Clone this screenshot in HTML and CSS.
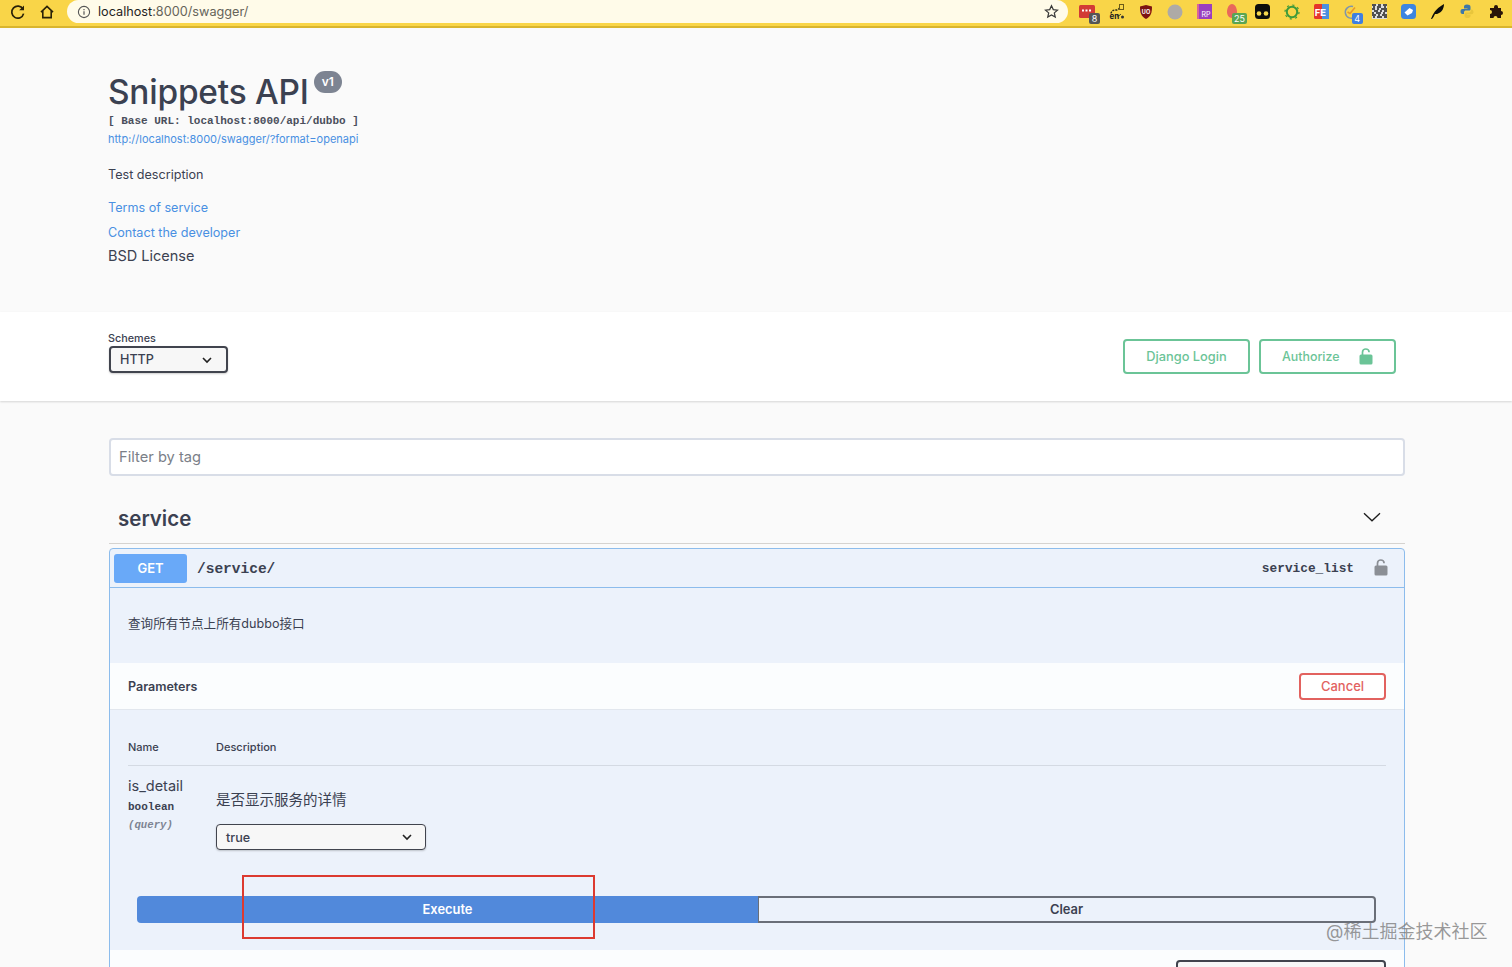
FILE: index.html
```html
<!DOCTYPE html>
<html lang="en">
<head>
<meta charset="utf-8">
<title>Snippets API</title>
<link rel="stylesheet" href="styles.css">
</head>
<body>
<header class="toolbar">
  <button class="nav-btn" aria-label="Reload"><svg width="16" height="16" viewBox="0 0 16 16"><path d="M13 5.2A6 6 0 1 0 13.6 9.6" fill="none" stroke="#2a2208" stroke-width="1.7"/><path d="M14 1.4V6.2H9.2Z" fill="#2a2208"/></svg></button>
  <button class="nav-btn" aria-label="Home"><svg width="16" height="16" viewBox="0 0 16 16"><path d="M2 8.2 8 2.4l6 5.8M3.8 7v6.6h8.4V7" fill="none" stroke="#2a2208" stroke-width="1.6"/></svg></button>
  <div class="omnibox">
    <svg class="info-icon" width="14" height="14" viewBox="0 0 14 14"><circle cx="7" cy="7" r="5.6" fill="none" stroke="#555" stroke-width="1.1"/><path d="M7 6.2v3.6M7 4.1v1.1" stroke="#555" stroke-width="1.2"/></svg>
    <span class="url"><span class="url-host">localhost</span>:8000/swagger/</span>
    <svg class="star" width="15" height="15" viewBox="0 0 16 16"><path d="M8 1.8l1.9 4.2 4.5.5-3.4 3 1 4.5L8 11.7 4 14l1-4.5-3.4-3 4.5-.5z" fill="none" stroke="#3a3a3a" stroke-width="1.3"/></svg>
  </div>
  <div class="extensions">
    <span class="ext"><svg width="17" height="16" viewBox="0 0 17 16"><rect y="1" width="16" height="13" rx="1.5" fill="#d23b35"/><path d="M3 6.500h2M6.500 6.500h2M10 6.500h2" stroke="#fff" stroke-width="2"/></svg><span class="badge badge-dark">8</span></span>
    <span class="ext"><svg width="16" height="16" viewBox="0 0 16 16"><path d="M2 9.500c.5-3 3-3.500 5-3.500s3-1 4-2.500" fill="none" stroke="#2a2a18" stroke-width="1.400" stroke-dasharray="2 1"/><rect x="10.500" y="0.500" width="4" height="5" fill="none" stroke="#6b5a18"/><text x="0.500" y="15" class="ext-en">en</text><circle cx="13.500" cy="13" r="1.500" fill="#333"/><path d="M8 12c2 0 3-1 4-2" fill="none" stroke="#2a2a18"/></svg></span>
    <span class="ext"><svg width="14" height="16" viewBox="0 0 14 16"><path d="M1 2.500 7 1l6 1.500c0 6-1 10-6 12.500C2 12.500 1 8.500 1 2.500z" fill="#7c1313"/><text x="7" y="9.500" class="ext-ub">UO</text></svg></span>
    <span class="ext"><svg width="16" height="16" viewBox="0 0 16 16"><circle cx="8" cy="8" r="7.500" fill="#aeaaa6"/></svg></span>
    <span class="ext"><svg width="15" height="15" viewBox="0 0 15 15"><rect width="15" height="15" fill="#9a3fc0"/><rect width="2" height="15" fill="#d9649a"/><text x="4.500" y="13" class="ext-rp">RP</text></svg></span>
    <span class="ext"><svg width="16" height="16" viewBox="0 0 16 16"><path d="M6 0c3 0 5 4 5 8 0 3-2 6-5 6S1 11 1 8c0-4 2-8 5-8z" fill="#e9685b"/></svg><span class="badge badge-green">25</span></span>
    <span class="ext"><svg width="15" height="15" viewBox="0 0 15 15"><rect width="15" height="15" rx="3.500" fill="#0c0c0c"/><circle cx="4" cy="9.500" r="2.300" fill="#f4d64e"/><circle cx="11" cy="9.500" r="2.300" fill="#f4d64e"/></svg></span>
    <span class="ext"><svg width="16" height="16" viewBox="0 0 16 16"><circle cx="8" cy="8" r="5.200" fill="none" stroke="#3f9a3a" stroke-width="2"/><circle cx="8" cy="8" r="7" fill="none" stroke="#3f9a3a" stroke-width="1.200" stroke-dasharray="2.200 3.300"/></svg></span>
    <span class="ext"><svg width="15" height="15" viewBox="0 0 15 15"><rect width="15" height="15" rx="1.500" fill="#e5352b"/><rect x="8" width="7" height="15" fill="#4a8fe0"/><text x="0.800" y="11.500" class="ext-fe">FE</text></svg></span>
    <span class="ext"><svg width="16" height="16" viewBox="0 0 16 16"><path d="M11 2.500A6 6 0 1 0 13 13" fill="none" stroke="#7f95ac" stroke-width="1.500"/><path d="M5.500 8l2.500 1.500 5-6" fill="none" stroke="#ea9a28" stroke-width="1.600"/></svg><span class="badge badge-blue">4</span></span>
    <span class="ext"><svg width="15" height="15" viewBox="0 0 15 15"><rect width="15" height="15" fill="#ddd"/><path d="M0 1h4M6 1h3M11 1h4M1 3h2M5 3h4M12 3h2M0 5h3M5 5h2M9 5h6M2 7h4M8 7h2M12 7h3M0 9h2M4 9h5M11 9h2M0 11h4M6 11h2M10 11h5M1 13h2M5 13h5M12 13h3" stroke="#222" stroke-width="1.500"/></svg></span>
    <span class="ext"><svg width="15" height="15" viewBox="0 0 15 15"><rect width="15" height="15" rx="3.500" fill="#3d85e0"/><path d="M3.500 8.500 8.500 4l3.500 2-1 3-4.500 2.500z" fill="#fff"/></svg></span>
    <span class="ext"><svg width="15" height="17" viewBox="0 0 15 17"><path d="M1 16C3 11 5 6 14 1c0 4-2 8-5 9-1 1-3 1-4 1-1 2-2 4-3 5z" fill="#0d0d0a"/></svg></span>
    <span class="ext"><svg width="14" height="15" viewBox="0 0 14 15"><path d="M7 .5C4.500.5 4 1.500 4 3v1.500h3.500V5H2.500C1 5 .5 6.200.5 7.500S1 10 2.500 10H4V8.500C4 7 5 6.500 6 6.500h3C10 6.500 10.500 6 10.500 5V3C10.500 1.200 9 .5 7 .5z" fill="#3f78a8"/><path d="M10.800 5.500V6.800C10.800 8 10 8.500 9 8.500H6C5 8.500 4.500 9 4.500 10v2C4.500 13.500 6 14 7.500 14s3-.5 3-2v-1.200H7v-.5h4.500C13 10.300 13.500 9 13.500 8s-.5-2.500-2-2.500z" fill="#e8c63c"/></svg></span>
    <span class="ext"><svg width="15" height="15" viewBox="0 0 15 15"><path d="M5 3a2 2 0 1 1 4 0v1h3v3a2 2 0 1 1 0 4v3H8.500a2 2 0 1 0-4 0H1v-4a2 2 0 1 0 0-4V4h4z" fill="#2a1408"/></svg></span>
  </div>
</header>

<main class="page">
  <section class="info">
    <h1 class="title">Snippets API<span class="version">v1</span></h1>
    <p class="base-url">[ Base URL: localhost:8000/api/dubbo ]</p>
    <a class="spec-link" href="#">http://localhost:8000/swagger/?format=openapi</a>
    <p class="test-desc">Test description</p>
    <a class="info-link terms" href="#">Terms of service</a>
    <a class="info-link contact" href="#">Contact the developer</a>
    <p class="license">BSD License</p>
  </section>

  <section class="schemes">
    <div class="schemes-inner">
      <div class="schemes-left">
        <span class="schemes-label">Schemes</span>
        <div class="select select-http"><span>HTTP</span><svg width="12" height="12" viewBox="0 0 12 12"><path d="M2 4l4 4 4-4" fill="none" stroke="#222" stroke-width="1.600"/></svg></div>
      </div>
      <div class="auth">
        <button class="btn-auth btn-login">Django Login</button>
        <button class="btn-auth btn-authorize">Authorize<svg width="14" height="17" viewBox="0 0 14 17"><path d="M3.500 8V4.300a3.300 3.300 0 0 1 6.600 0" fill="none" stroke="#6bc497" stroke-width="1.700"/><rect x="0.500" y="6.500" width="13" height="10" rx="1.500" fill="#6bc497"/></svg></button>
      </div>
    </div>
  </section>

  <section class="content wrap">
    <div class="filter">Filter by tag</div>
    <div class="tag">
      <h2 class="tag-name">service</h2>
      <svg class="tag-arrow" width="18" height="10" viewBox="0 0 18 10"><path d="M1 1.200 9 8.800l8-7.600" fill="none" stroke="#1c1c1c" stroke-width="1.300"/></svg>
    </div>
    <article class="opblock">
      <div class="summary">
        <span class="method">GET</span>
        <span class="path">/service/</span>
        <span class="op-id">service_list</span>
        <svg class="op-lock" width="14" height="17" viewBox="0 0 14 17"><path d="M3.500 8V4.300a3.300 3.300 0 0 1 6.600 0" fill="none" stroke="#8b8f95" stroke-width="1.700"/><rect x="0.500" y="6.500" width="13" height="10" rx="1.500" fill="#8b8f95"/></svg>
      </div>
      <p class="op-desc">查询所有节点上所有dubbo接口</p>
      <div class="section-head">
        <h3 class="section-title">Parameters</h3>
        <button class="btn-cancel">Cancel</button>
      </div>
      <div class="params">
        <div class="params-head"><span class="col-name">Name</span><span>Description</span></div>
        <div class="param-row">
          <div class="col-name param-name">
            <span class="pname">is_detail</span>
            <span class="ptype">boolean</span>
            <span class="pin">(query)</span>
          </div>
          <div class="param-value">
            <p class="param-desc">是否显示服务的详情</p>
            <div class="select select-true"><span>true</span><svg width="12" height="12" viewBox="0 0 12 12"><path d="M2 4l4 4 4-4" fill="none" stroke="#222" stroke-width="1.600"/></svg></div>
          </div>
        </div>
      </div>
      <div class="actions">
        <button class="btn-execute">Execute</button>
        <button class="btn-clear">Clear</button>
      </div>
      <div class="responses"><div class="resp-select"></div></div>
    </article>
  </section>
</main>

<div class="annotation"></div>
<div class="watermark">@稀土掘金技术社区</div>
</body>
</html>
```
FILE: styles.css
```css
* { box-sizing: border-box; }
html, body { margin: 0; height: 967px; overflow: hidden; }
body { background: #fafafa; font-family: Inter, "Liberation Sans", "Noto Sans CJK SC", sans-serif; color: #3b4151; position: relative; }
button { font-family: inherit; cursor: pointer; }
p, h1, h2, h3 { margin: 0; }
a { text-decoration: none; }

.toolbar { height: 28px; background: #f9d548; border-bottom: 2px solid #d9b52e; display: flex; align-items: flex-start; padding-left: 3px; }
.nav-btn { width: 29px; height: 23px; padding: 0; border: 0; background: none; display: flex; align-items: center; justify-content: center; }
.omnibox { width: 1001px; height: 23px; margin-left: 6px; background: #fffbe9; border-radius: 12px; display: flex; align-items: center; padding: 0 9px 0 10px; }
.info-icon { margin-right: 7px; }
.url { font-size: 12.7px; line-height: 21px; color: #66645a; flex: 1; }
.url-host { color: #1f1f1f; }
.extensions { display: flex; margin-left: 5px; }
.ext { width: 29.2px; height: 23px; display: flex; align-items: center; justify-content: center; position: relative; }
.badge { position: absolute; left: 16px; top: 13px; height: 11px; min-width: 11px; padding: 0 2px; border-radius: 2px; color: #fff; font-size: 9px; line-height: 11px; text-align: center; }
.badge-dark { background: #555; }
.badge-green { background: #5aa552; left: 13px; width: 15px; padding: 0; }
.badge-blue { background: #3f7fe0; }
.ext-en { font-size: 8px; font-weight: 700; fill: #222; }
.ext-ub { font-size: 5.5px; font-weight: 700; fill: #fff; text-anchor: middle; }
.ext-rp { font-size: 7px; fill: #fff; }
.ext-fe { font-size: 9.5px; font-weight: 700; fill: #fff; }

.wrap { margin: 0 107px 0 109px; }
.info { height: 284px; margin-left: 108px; padding-top: 41px; display: flex; flex-direction: column; align-items: flex-start; }
.title { font-size: 33.4px; font-weight: 550; line-height: 46px; color: #3b4151; display: flex; align-items: flex-start; letter-spacing: -.2px; }
.version { height: 22px; width: 28px; margin: 2px 0 0 5px; border-radius: 11px; background: #7d8492; color: #fff; font-size: 12px; font-weight: 600; line-height: 22px; text-align: center; letter-spacing: 0; }
.base-url { font: 700 11px/16px "Liberation Mono", monospace; margin-top: -2px; color: #4a4f5c; }
.spec-link { font-size: 11px; line-height: 16px; margin-top: 2px; color: #4990e2; }
.test-desc { font-size: 12.6px; line-height: 20px; margin-top: 18px; }
.info-link { font-size: 12.6px; line-height: 20px; color: #4990e2; }
.terms { margin-top: 13px; }
.contact { margin-top: 5px; }
.license { font-size: 14.5px; line-height: 20px; margin-top: 3px; }

.schemes { height: 89px; background: #fff; box-shadow: 0 1px 2px rgba(0,0,0,.15); position: relative; }
.schemes-inner { margin: 0 116px 0 108px; height: 100%; display: flex; justify-content: space-between; }
.schemes-left { display: flex; flex-direction: column; padding-top: 20px; }
.schemes-label { font-size: 10.8px; font-weight: 500; line-height: 14px; color: #3b4151; }
.select { display: flex; align-items: center; justify-content: space-between; border: 2px solid #41444e; border-radius: 4px; background: #f7f7f7; box-shadow: 0 1px 2px rgba(0,0,0,.2); font-weight: 500; color: #3b4151; }
.select-http { width: 119px; height: 27px; margin-left: 1px; padding: 0 13px 0 9px; font-size: 12.6px; }
.select-true { width: 210px; height: 26px; padding: 0 12px 0 9px; font-size: 12.6px; border: 1px solid #41444e; }
.auth { display: flex; gap: 9px; padding-top: 27px; align-items: flex-start; }
.btn-auth { height: 35px; border: 2px solid #6bc497; border-radius: 4px; background: #fff; color: #6bc497; font-size: 12.8px; font-weight: 500; padding: 0 0 1px; }
.btn-login { width: 127px; }
.btn-authorize { width: 137px; font-size: 12.4px; display: flex; align-items: center; justify-content: space-between; padding: 0 21px 1px; }

.content { padding-top: 37px; }
.filter { height: 38px; border: 2px solid #d8dde7; border-radius: 4px; background: #fff; color: #7b7f88; font-size: 14.7px; line-height: 34px; padding-left: 8px; }
.tag { height: 68px; border-bottom: 1px solid #d5d3d0; display: flex; align-items: center; justify-content: space-between; padding: 18px 24px 0 9px; }
.tag-name { font-size: 20.5px; font-weight: 600; line-height: 30px; color: #3b4151; }
.tag-arrow { margin-top: -3px; }
.opblock { margin-top: 4px; border: 1px solid #8cbcec; border-radius: 4px; background: #ecf2fb; height: 500px; }
.summary { height: 39px; border-bottom: 1px solid #8cbcec; display: flex; align-items: center; padding: 0 16px 0 4px; }
.method { width: 73px; height: 29px; border-radius: 3px; background: #69a9f8; color: #fff; font-size: 13px; font-weight: 600; line-height: 29px; text-align: center; }
.path { font: 700 14.5px/1 "Liberation Mono", monospace; margin: 2px 0 0 10px; flex: 1; color: #3b4151; }
.op-id { font: 700 12.8px/1 "Liberation Mono", monospace; margin: 2px 20px 0 0; color: #3b4151; }
.op-lock { margin-top: -2px; }
.op-desc { height: 75px; padding: 27px 0 0 18px; font-size: 12.6px; line-height: 18px; }
.section-head { height: 47px; background: #fbfdfe; border-bottom: 1px solid #e2e7ee; display: flex; align-items: center; justify-content: space-between; padding: 0 18px; }
.section-title { font-size: 12.5px; font-weight: 600; color: #3b4151; }
.btn-cancel { width: 87px; height: 27px; border: 2px solid #e2625f; border-radius: 4px; background: #fff; color: #e2625f; font-size: 13px; font-weight: 500; padding: 0; }
.params { padding: 0 18px; }
.params-head { height: 56px; border-bottom: 1px solid #d4dae3; display: flex; align-items: center; padding-top: 19px; font-size: 11px; font-weight: 500; color: #3b4151; }
.col-name { width: 88px; flex: none; }
.param-row { display: flex; height: 130px; }
.param-name { display: flex; flex-direction: column; padding-top: 10px; }
.pname { font-size: 14.5px; line-height: 20px; }
.ptype { font: 700 11px/16px "Liberation Mono", monospace; margin-top: 3px; }
.pin { font: italic 700 10.7px/16px "Liberation Mono", monospace; margin-top: 2px; color: #7d8492; }
.param-value { display: flex; flex-direction: column; padding-top: 24px; align-items: flex-start; }
.param-desc { font-size: 14.5px; line-height: 20px; margin-bottom: 14px; }
.actions { display: flex; margin: 0 28px 0 27px; height: 27px; }
.btn-execute { flex: none; width: 621px; height: 27px; border: 0; border-radius: 4px 0 0 4px; background: #5189db; color: #fff; font-size: 12.9px; font-weight: 600; padding: 0; }
.btn-clear { flex: 1; height: 27px; border: 2px solid #6a6f78; border-left-width: 1px; border-radius: 0 4px 4px 0; background: #ecf2fb; color: #3b4151; font-size: 12.9px; font-weight: 600; padding: 0; }
.responses { margin-top: 27px; height: 100px; background: #fbfdfe; padding: 10px 18px 0 0; display: flex; justify-content: flex-end; }
.resp-select { width: 210px; height: 30px; border: 2px solid #41444e; border-radius: 4px; background: #f7f7f7; }

.annotation { position: absolute; left: 242px; top: 875px; width: 353px; height: 64px; border: 2px solid #dc3a30; }
.watermark { position: absolute; left: 1326px; top: 920px; font-size: 18px; line-height: 24px; color: rgba(120,120,120,.75); white-space: nowrap; }
```
